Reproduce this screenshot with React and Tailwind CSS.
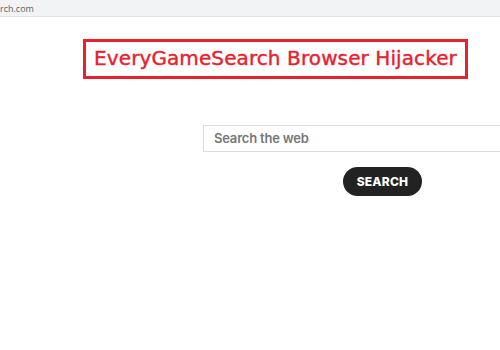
export default function App() {
  return (
    <div className="w-[500px] h-[350px] overflow-hidden bg-white relative">
      {/* address bar */}
      <div className="h-[17px] bg-[#f1f3f4] border-b border-[#e3e3e3] flex items-center">
        <span className="text-[9px] text-[#5f6368] leading-none" style={{ fontFamily: '"Open Sans", sans-serif' }}>rch.com</span>
      </div>

      <div className="pl-[83px] pt-[22px]">
        <div
          className="w-[385px] h-[40px] border-[3px] border-[#e8212e] flex items-center justify-center text-[#e8212e] text-[20px] leading-none whitespace-nowrap"
          style={{ fontFamily: '"Comic Sans MS", "DejaVu Sans", sans-serif' }}
        >
          <span className="tracking-[0.1px] -mt-[2px] [-webkit-text-stroke:0.4px_#e8212e]">EveryGameSearch Browser Hijacker</span>
        </div>
      </div>

      <div className="pl-[203px] pt-[46px]">
        <div className="h-[27px] w-[320px] border border-[#dcdcdc] flex items-center pl-[10px]">
          <span className="text-[13px] font-semibold text-[#777] tracking-[-0.2px]" style={{ fontFamily: 'Inter, sans-serif' }}>Search the web</span>
        </div>
      </div>

      <div className="pl-[343px] pt-[15px]">
        <div className="w-[79px] h-[29px] rounded-full bg-[#222] flex items-center justify-center">
          <span className="text-white text-[12px] font-extrabold tracking-[0.2px]" style={{ fontFamily: 'Inter, sans-serif' }}>SEARCH</span>
        </div>
      </div>
    </div>
  );
}
